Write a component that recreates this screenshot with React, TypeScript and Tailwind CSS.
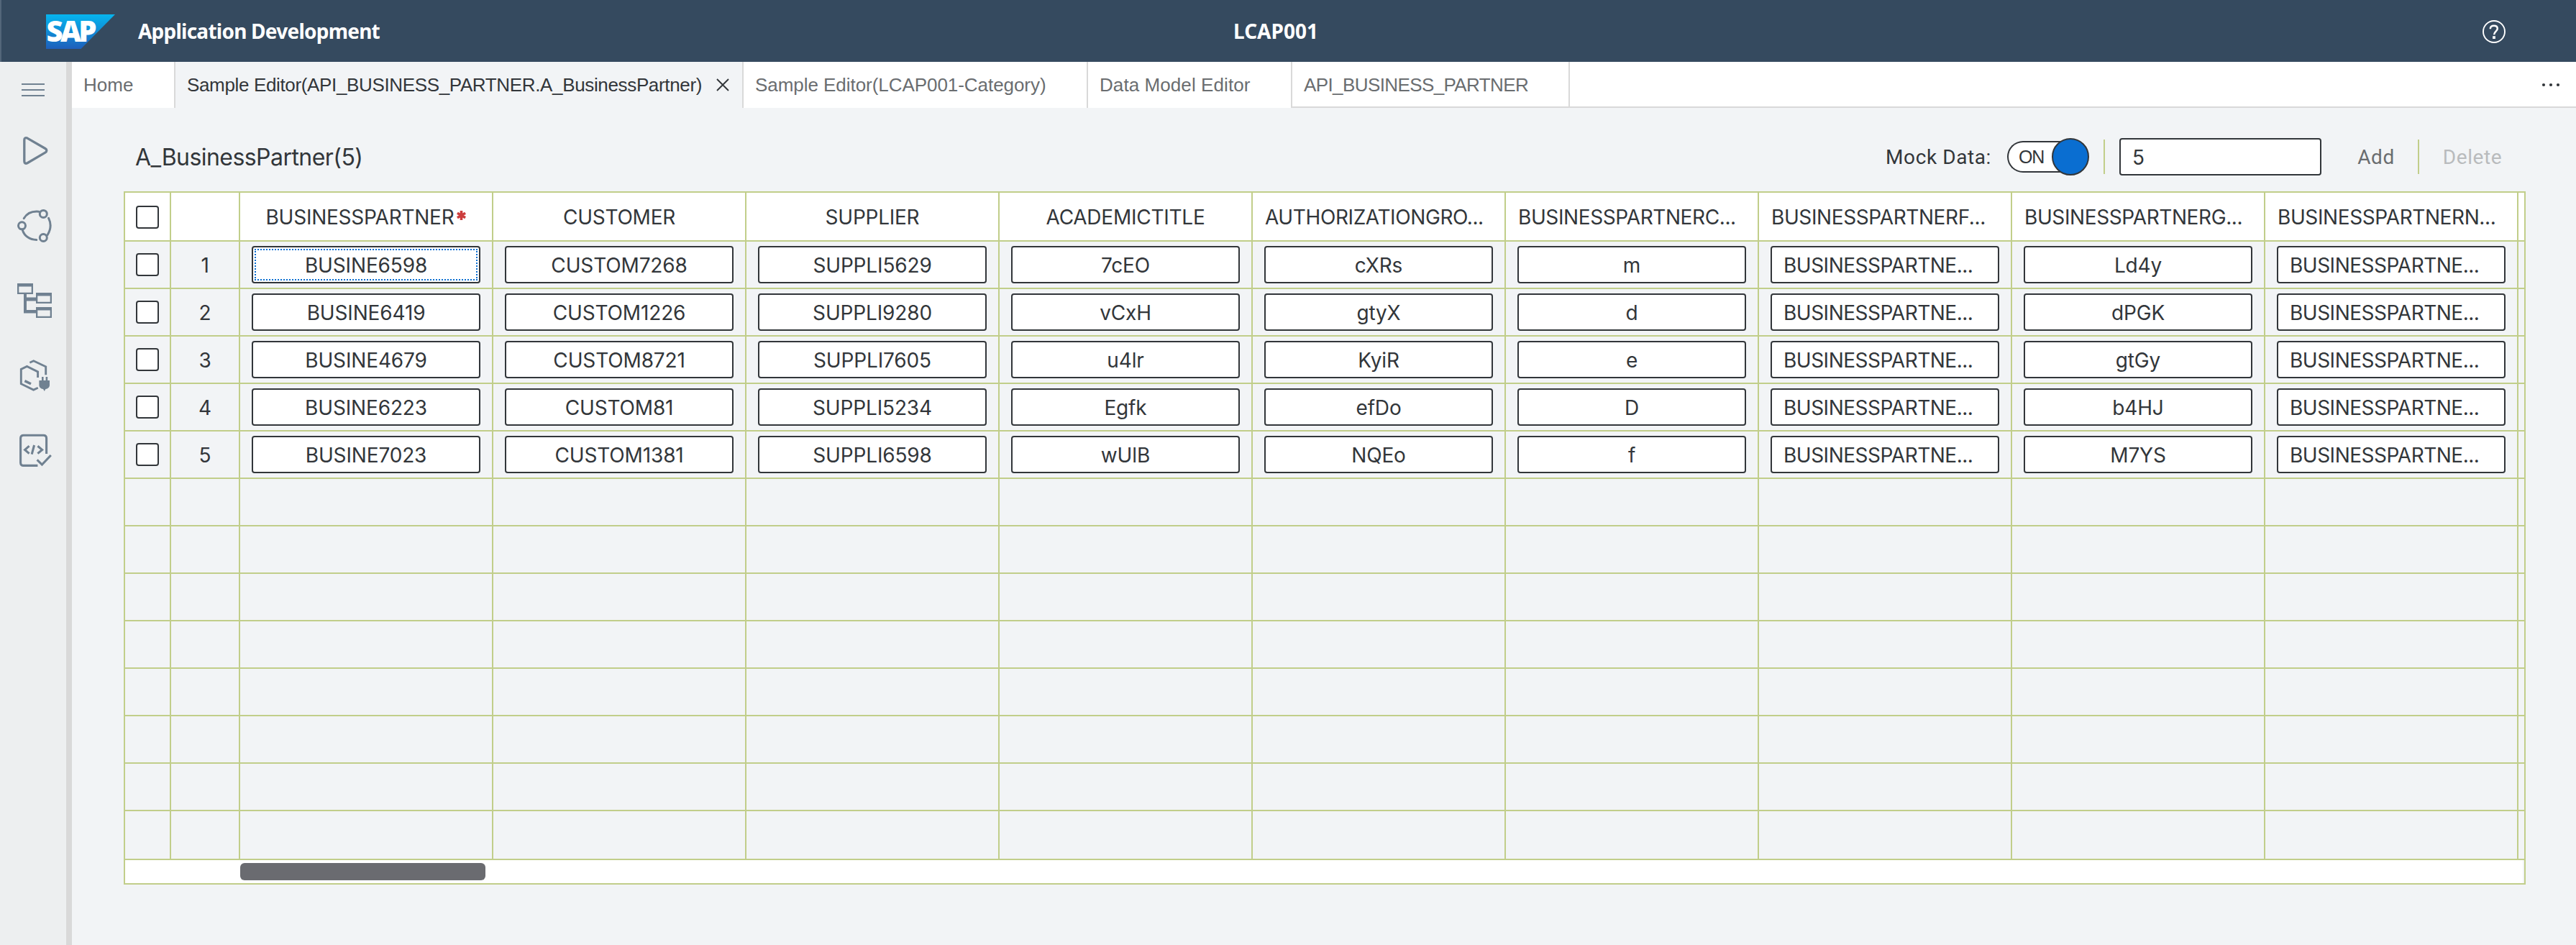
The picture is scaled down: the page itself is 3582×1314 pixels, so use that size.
import React from "react";

const columns = [
  "BUSINESSPARTNER",
  "CUSTOMER",
  "SUPPLIER",
  "ACADEMICTITLE",
  "AUTHORIZATIONGRO...",
  "BUSINESSPARTNERC...",
  "BUSINESSPARTNERF...",
  "BUSINESSPARTNERG...",
  "BUSINESSPARTNERN...",
];

const LONG = "BUSINESSPARTNE...";

const rows = [
  ["BUSINE6598", "CUSTOM7268", "SUPPLI5629", "7cEO", "cXRs", "m", LONG, "Ld4y", LONG],
  ["BUSINE6419", "CUSTOM1226", "SUPPLI9280", "vCxH", "gtyX", "d", LONG, "dPGK", LONG],
  ["BUSINE4679", "CUSTOM8721", "SUPPLI7605", "u4lr", "KyiR", "e", LONG, "gtGy", LONG],
  ["BUSINE6223", "CUSTOM81", "SUPPLI5234", "Egfk", "efDo", "D", LONG, "b4HJ", LONG],
  ["BUSINE7023", "CUSTOM1381", "SUPPLI6598", "wUlB", "NQEo", "f", LONG, "M7YS", LONG],
];

const emptyRows = [0, 1, 2, 3, 4, 5, 6, 7];

function Checkbox() {
  return <span className="block size-8 rounded-[4px] border-2 border-[#32363a] bg-white" />;
}

function Header() {
  return (
    <header className="grid h-[86px] grid-cols-[1fr_auto_1fr] items-center border-l-2 border-[#53667a] bg-[#354a5f] font-['Noto_Sans',sans-serif] text-[28px] font-bold text-white">
      <div className="flex items-center pl-[62px]">
        <svg width="96" height="48" viewBox="0 0 96 48" className="mt-0.5 overflow-visible">
          <defs>
            <linearGradient id="sap" x1="0" y1="0" x2="0" y2="1">
              <stop offset="0" stopColor="#06b5ee" />
              <stop offset="0.5" stopColor="#118cd6" />
              <stop offset="1" stopColor="#1e5fbb" />
            </linearGradient>
          </defs>
          <path d="M0 0H96L48.5 48H0Z" fill="url(#sap)" />
          <text x="0.5" y="38.2" textLength="70" lengthAdjust="spacing" fontSize="40" fontFamily="Open Sans, sans-serif" fontWeight="800" fill="#fff">
            SAP
          </text>
        </svg>
        <span className="ml-8 tracking-[-0.76px]">Application Development</span>
      </div>
      <div className="relative -left-[18px]">LCAP001</div>
      <div className="flex justify-end pr-[98px]">
        <svg width="32" height="32" viewBox="0 0 32 32" fill="none" stroke="#fff" className="mt-0.5">
          <circle cx="16" cy="16" r="15" strokeWidth="1.9" />
          <path d="M10.8 12.2C10.8 9.2 13 7.7 15.9 7.7s4.9 1.5 4.9 4.1c0 3.7-4.7 4.1-4.7 8.4" strokeWidth="2.5" />
          <path d="M16 22.2v3.8" strokeWidth="3.8" />
        </svg>
      </div>
    </header>
  );
}

function Sidebar() {
  return (
    <nav className="flex w-[100px] shrink-0 flex-col items-start border-r-8 border-[#d9d9d9] bg-[#edeff0] pt-[15px] pl-6 text-[#708191]">
      <svg width="48" height="48" viewBox="24 101 48 48" className="fill-current">
        <path d="M30 116h32v2H30zM30 124h32v2H30zM30 132h32v2H30z" />
      </svg>
      <svg width="48" height="48" viewBox="24 186 48 48" className="mt-[37px] fill-none stroke-current" strokeWidth="3.3">
        <path d="M33.8 194.5c0-2.7 1.8-3.6 4.2-2.4l24.9 14.4c2.6 1.5 2.6 4.1 0 5.6L38 226.7c-2.4 1.2-4.2.3-4.2-2.4z" />
      </svg>
      <svg width="48" height="48" viewBox="24 290 48 48" className="mt-14 fill-none stroke-current" strokeWidth="3" strokeLinecap="round">
        <circle cx="60.3" cy="297.4" r="5" />
        <circle cx="30.5" cy="313.8" r="5" />
        <circle cx="60.3" cy="330.5" r="5" />
        <path d="M33.2 303.8c4-7 11-10.4 20.6-9.6" />
        <path d="M67.6 303.4c3.8 7.6 4 14.4-1.6 23.4" />
        <path d="M31.4 320.2c2.6 8 10 13.2 19.4 13.2" />
      </svg>
      <svg width="48" height="48" viewBox="24 394 48 48" className="mt-14 fill-current">
        <path fillRule="evenodd" d="M24 394h22v15H24zM26.3 398.5v8.2h17.4v-8.2zM50 407h22v15H50zM52.3 411.5v8.2h17.4v-8.2zM50 427h22v15H50zM52.3 431.5v8.2h17.4v-8.2z" />
        <path d="M33 409h4v4.5h13v5H37V431h13v4.4H33z" />
      </svg>
      <svg width="48" height="48" viewBox="24 498 48 48" className="mt-14 fill-none stroke-current" strokeWidth="2.9">
        <path d="M41.4 504.2l5.3-2.4 17 8v11.4" />
        <path d="M52.6 525v-8l-15.1-7.6-8.2 4v20.3l17.3 8.4 6.2-2.8" />
        <path d="M34.4 529.6l8.6 4.2" strokeWidth="3.4" />
        <path d="M54.4 529H58v-5h2.6v5h3v-5h2.6v5H69v6.5c0 3-2.4 5-5.6 5.6L61.8 544l-1.8-2.9c-3.2-.6-5.6-2.6-5.6-5.6z" className="fill-current" stroke="none" />
      </svg>
      <svg width="48" height="48" viewBox="24 602 48 48" className="mt-14 fill-none stroke-current" strokeWidth="3.1">
        <path d="M64.6 631v-21.6c0-2.8-1.4-4.2-4.2-4.2H32.8c-2.8 0-4.2 1.4-4.2 4.2v33.8c0 2.8 1.4 4.2 4.2 4.2h19.6" />
        <path d="M40.6 620.2l-6 5.2 6 5.2M52.4 620.2l6.2 5.2-6.2 5.2M47.6 619l-3.4 12.6" />
        <path d="M51.6 639.4l6.8 6.6 12.4-13" />
      </svg>
    </nav>
  );
}

function TabBar() {
  return (
    <div className="flex h-16 bg-white pb-px font-['Liberation_Sans',Arial,sans-serif] text-[26px] whitespace-nowrap text-[#6a6d70]">
      <div className="-mb-px flex w-36 items-center border-r-2 border-[#d9d9d9] pl-4">Home</div>
      <div className="-mb-px flex w-[790px] items-center border-r-2 border-[#d9d9d9] bg-[#f2f4f6] pl-4 text-[#32363a]">
        <span className="w-[736px] tracking-[-0.35px]">Sample Editor(API_BUSINESS_PARTNER.A_BusinessPartner)</span>
        <svg width="18" height="18" viewBox="0 0 18 18" fill="none" stroke="#32363a" strokeWidth="1.9">
          <path d="M1 1l16 16M17 1L1 17" />
        </svg>
      </div>
      <div className="-mb-px flex w-[479px] items-center border-r-2 border-[#d9d9d9] pl-4 tracking-[-0.05px]">Sample Editor(LCAP001-Category)</div>
      <div className="-mb-px flex w-[284px] items-center border-r-2 border-[#d9d9d9] pl-4 tracking-[0.08px]">Data Model Editor</div>
      <div className="-mb-px flex flex-1 border-b-2 border-[#d9d9d9]">
        <div className="flex w-[386px] items-center border-r-2 border-[#d9d9d9] pt-0.5 pl-4 tracking-[-0.6px]">API_BUSINESS_PARTNER</div>
        <div className="flex flex-1 items-center justify-end pt-0.5 pr-[21px]">
          <svg width="28" height="6" viewBox="0 0 28 6" fill="#32363a">
            <circle cx="4" cy="3" r="2.1" />
            <circle cx="14" cy="3" r="2.1" />
            <circle cx="24" cy="3" r="2.1" />
          </svg>
        </div>
      </div>
    </div>
  );
}

function Toolbar() {
  return (
    <div className="flex h-[52px] items-center font-['Roboto',sans-serif] text-[28px] tracking-[0.6px] text-[#32363a]">
      <h1 className="flex-1 pt-0.5 pl-4 font-['Inter',sans-serif] text-[32px] tracking-[-0.55px]">A_BusinessPartner(5)</h1>
      <span className="mr-[22px] pt-0.5">Mock Data:</span>
      <div className="relative flex h-11 w-[114px] items-center">
        <div className="flex h-11 w-[95px] items-center rounded-l-full border-2 border-r-0 border-[#32363a] bg-white pt-0.5 pl-[14px] font-['Liberation_Sans',sans-serif] text-[25px] tracking-[-1.2px]">
          ON
        </div>
        <span className="absolute right-0 size-[52px] rounded-full border-2 border-[#32363a] bg-[#0a6ed1]" />
      </div>
      <span className="ml-5 h-12 w-0.5 bg-[#c1ce8a]" />
      <div className="ml-5 flex h-[52px] w-[281px] items-center rounded-[4px] border-2 border-[#32363a] bg-white pt-0.5 pl-4 font-['Inter',sans-serif]">5</div>
      <span className="w-[134px] pt-px pl-[18px] text-center text-[#6a6d70]">Add</span>
      <span className="h-12 w-0.5 bg-[#c1ce8a]" />
      <span className="w-[148px] pt-px text-center text-[#b9bbbd]">Delete</span>
    </div>
  );
}

const line = "border-[#c1ce8a]";

function Cells({ children }: { children: React.ReactNode }) {
  return <div className="grid grid-cols-[64px_96px_repeat(9,352px)_8px]">{children}</div>;
}

function Table() {
  return (
    <div className={`h-[964px] w-[3340px] border-2 ${line} font-['Inter',sans-serif] text-[28px] tracking-[-0.15px] text-[#32363a]`}>
      <Cells>
        <div className={`flex h-[68px] items-center border-r-2 border-b-2 ${line} bg-white pt-0.5 pl-[15px]`}>
          <Checkbox />
        </div>
        <div className={`border-r-2 border-b-2 ${line} bg-white`} />
        {columns.map((name, i) => (
          <div key={name} className={`flex items-center border-r-2 border-b-2 ${line} bg-white pt-0.5 whitespace-nowrap ${i > 3 ? "justify-start pl-[17px] tracking-[-0.4px]" : "justify-center tracking-[-0.25px]"}`}>
            {name}
            {i === 0 && (
              <svg width="13" height="13" viewBox="0 0 13 13" stroke="#cc3d3d" strokeWidth="3.6" className="-mt-1.5 ml-1">
                <path d="M6.5 0v13M.9 3.2l11.2 6.6M12.1 3.2L.9 9.8" />
              </svg>
            )}
          </div>
        ))}
        <div className={`border-b-2 ${line} bg-white`} />
      </Cells>
      {rows.map((row, r) => (
        <Cells key={r}>
          <div className={`flex h-[66px] items-center border-r-2 border-b-2 ${line} pl-[15px]`}>
            <Checkbox />
          </div>
          <div className={`flex items-center justify-center border-r-2 border-b-2 ${line} pt-0.5`}>{r + 1}</div>
          {row.map((value, c) => (
            <div key={c} className={`flex items-center justify-center border-r-2 border-b-2 ${line}`}>
              <div
                className={`flex h-[52px] w-[318px] items-center rounded-[4px] border-2 border-[#32363a] bg-white pt-0.5 whitespace-nowrap ${value === LONG ? "pl-4 tracking-[-0.5px]" : "justify-center"} ${r === 0 && c === 0 ? "outline-2 -outline-offset-6 outline-[#0a6ed1] outline-dotted" : ""}`}
              >
                {value}
              </div>
            </div>
          ))}
          <div className={`border-b-2 ${line}`} />
        </Cells>
      ))}
      {emptyRows.map((r) => (
        <Cells key={r}>
          <div className={`border-r-2 border-b-2 ${line} ${r === 7 ? "h-[68px]" : "h-[66px]"}`} />
          <div className={`border-r-2 border-b-2 ${line}`} />
          {columns.map((name) => (
            <div key={name} className={`border-r-2 border-b-2 ${line}`} />
          ))}
          <div className={`border-b-2 ${line}`} />
        </Cells>
      ))}
      <div className="mr-0.5 h-8 bg-white pt-1 pl-40">
        <div className="h-6 w-[341px] rounded-md bg-[#6a6b70]" />
      </div>
    </div>
  );
}

export default function App() {
  return (
    <div className="flex h-[1314px] w-[3582px] flex-col overflow-hidden bg-[#f2f4f6]">
      <Header />
      <div className="flex flex-1">
        <Sidebar />
        <main className="flex-1">
          <TabBar />
          <div className="pt-[42px] pl-[72px]">
            <div className="w-[3340px]">
              <Toolbar />
            </div>
            <div className="mt-[22px]">
              <Table />
            </div>
          </div>
        </main>
      </div>
    </div>
  );
}
